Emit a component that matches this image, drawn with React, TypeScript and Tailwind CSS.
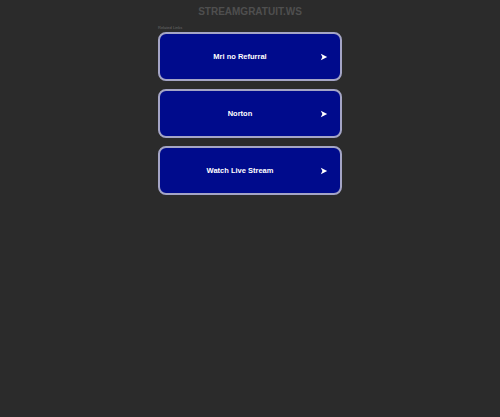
import React from "react";

const links = ["Mri no Refurral", "Norton", "Watch Live Stream"];

export default function App() {
  return (
    <div className="min-h-[417px] w-full bg-[#2b2b2b] font-['Liberation_Sans',Arial,sans-serif]">
      <div className="pt-[6px] text-center text-[10px] font-bold leading-[12px] text-[#4f4f4f]">
        STREAMGRATUIT.WS
      </div>
      <div className="mx-auto mt-[7px] w-[184px]">
        <div className="h-[6px] text-[4px] leading-[6px] text-[#6a6a6a]">Related Links</div>
        <div className="mt-[1px] flex flex-col gap-[8px]">
          {links.map((l) => (
            <a
              key={l}
              href="#"
              className="relative flex h-[49px] items-center justify-center rounded-[8px] border-2 border-[#a4a5c6] bg-[#000b8c] pr-[20px] text-[7.5px] font-bold text-white"
            >
              {l}
              <svg className="absolute right-[12px] top-1/2 -translate-y-1/2" width="8" height="8" viewBox="0 0 10 10">
                <path d="M1 1 L9 5 L1 9 L3 5 Z" fill="#ffffff" />
              </svg>
            </a>
          ))}
        </div>
      </div>
    </div>
  );
}
